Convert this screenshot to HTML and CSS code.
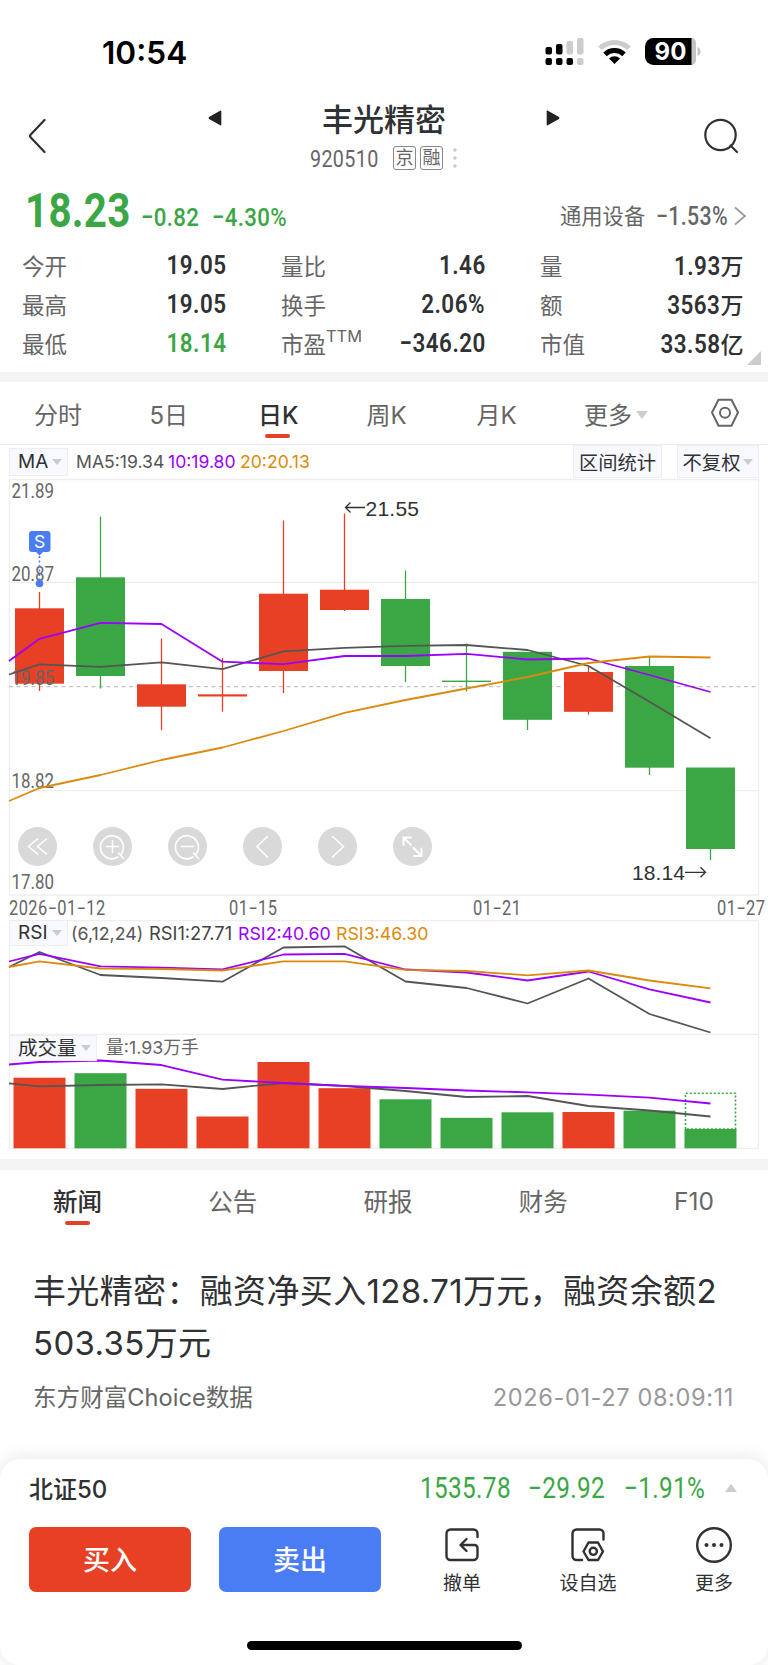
FILE: index.html
```html
<!DOCTYPE html>
<html lang="zh-CN">
  <head>
    <meta charset="utf-8">
    <title>丰光精密 920510</title>
    <link rel="stylesheet" href="styles.css">
  </head>
  <body>
    <!-- status bar -->
    <div class="status-bar">
      <span class="time">10:54</span>
      <svg class="status-icons" width="160" height="30" viewBox="543 36 160 30">
        <g fill="#000">
          <rect x="545.5" y="47" width="6.5" height="7.5" rx="2"/>
          <rect x="556" y="44" width="6.5" height="10.5" rx="2"/>
          <rect x="545.5" y="58" width="6.5" height="7" rx="2"/>
          <rect x="556" y="58" width="6.5" height="7" rx="2"/>
          <rect x="566.5" y="58" width="6.5" height="7" rx="2"/>
        </g>
        <g fill="#ccc">
          <rect x="566.5" y="41" width="6.5" height="13.5" rx="2"/>
          <rect x="577" y="38" width="6.5" height="16.5" rx="2"/>
          <rect x="577" y="58" width="6.5" height="7" rx="2"/>
        </g>
        <path d="M600 48.3a21 21 0 0 1 29 0" fill="none" stroke="#ccc" stroke-width="5"/>
        <path d="M605 54.3a14 14 0 0 1 19 0" fill="none" stroke="#000" stroke-width="5"/>
        <path d="M609 58.4a8 8 0 0 1 11 0L614.500 64z" fill="#000"/>
        <path d="M690 38h1.500a4.500 4.500 0 0 1 4.500 4.500v18a4.500 4.500 0 0 1-4.500 4.500H690zM697.500 47c4 1.500 4 7.500 0 9z" fill="#c4c4c4"/>
        <path d="M653.500 38H691.500V65H653.500a8.500 8.500 0 0 1-8.500-8.500V46.500a8.500 8.500 0 0 1 8.500-8.500z" fill="#000"/>
        <text x="670.500" y="60" class="battery-text">90</text>
      </svg>
    </div>

    <!-- header -->
    <header class="header">
      <svg class="back" width="18" height="36" viewBox="0 0 18 36"><path d="M16.500 2L2.600 16.700q-1.200 1.300 0 2.600L16.500 34" /></svg>
      <svg class="prev" width="14" height="16" viewBox="0 0 14 16"><path d="M12.500 0.600Q13.300 0.300 13.300 1.500V14.500Q13.300 15.700 12.300 15.300L1 9Q0 8 1 7z"/></svg>
      <div class="stock">
        <h1>丰光精密</h1>
        <div class="stock-code">
          <span class="code"><span class="num">920510</span></span>
          <span class="tag">京</span>
          <span class="tag">融</span>
          <svg width="4" height="20" viewBox="0 0 4 20"><g fill="#c8c8c8"><circle cx="2" cy="2" r="1.700"/><circle cx="2" cy="10" r="1.700"/><circle cx="2" cy="18" r="1.700"/></g></svg>
        </div>
      </div>
      <svg class="next" width="14" height="16" viewBox="0 0 14 16"><path d="M1.500 0.600Q0.700 0.300 0.700 1.500V14.500Q0.700 15.700 1.700 15.300L13 9Q14 8 13 7z"/></svg>
      <svg class="search" width="36" height="36" viewBox="0 0 36 36"><circle cx="17.500" cy="17" r="15.200"/><path d="M27.500 27.500L34 34"/></svg>
    </header>

    <!-- quote -->
    <section class="quote">
      <div class="price-row">
        <span class="price"><span class="num">18.23</span></span>
        <span class="change"><span class="num">−0.82</span></span>
        <span class="percent"><span class="num">−4.30%</span></span>
        <span class="sector">通用设备</span>
        <span class="sector-change"><span class="num">−1.53%</span></span>
        <svg width="14" height="20" viewBox="0 0 14 20"><path d="M2 1.500L12 10L2 18.500" fill="none" stroke="#999" stroke-width="1.700"/></svg>
      </div>
      <div class="stats">
        <div class="stat"><span>今开</span><b class="num">19.05</b></div>
        <div class="stat"><span>量比</span><b class="num">1.46</b></div>
        <div class="stat"><span>量</span><b><i class="num">1.93</i>万</b></div>
        <div class="stat"><span>最高</span><b class="num">19.05</b></div>
        <div class="stat"><span>换手</span><b class="num">2.06%</b></div>
        <div class="stat"><span>额</span><b><i class="num">3563</i>万</b></div>
        <div class="stat"><span>最低</span><b class="num green">18.14</b></div>
        <div class="stat"><span>市盈<sup>TTM</sup></span><b class="num">−346.20</b></div>
        <div class="stat"><span>市值</span><b><i class="num">33.58</i>亿</b></div>
      </div>
      <div class="corner"></div>
    </section>

    <!-- chart period tabs -->
    <nav class="period-tabs">
      <span class="tab">分时</span>
      <span class="tab">5日</span>
      <span class="tab active">日K</span>
      <span class="tab">周K</span>
      <span class="tab">月K</span>
      <span class="tab">更多<i class="caret"></i></span>
      <svg width="30" height="30" viewBox="0 0 30 30"><path d="M8.500 1.800H21.500L28 14.500L21.500 27.700H8.500L2 14.500z"/><circle cx="15" cy="14.800" r="5"/></svg>
    </nav>

    <section class="chart">
      <div class="ma-bar">
        <span class="picker">MA<i class="caret small"></i></span>
        <span class="ma5">MA5:19.34</span>
        <span class="ma10">10:19.80</span>
        <span class="ma20">20:20.13</span>
        <span class="tool range">区间统计</span>
        <span class="tool adjust">不复权<i class="caret small"></i></span>
      </div>

      <!-- daily candles -->
      <svg class="plot" width="768" height="418" viewBox="0 478 768 418">
        <g class="grid">
          <path d="M9.500 479.500H758.500V895H9.500z"/>
          <path d="M9 582.500H758M9 790.700H758"/>
          <path class="dashed" d="M9 686.700H758"/>
        </g>
        <g class="up">
          <path d="M39.500 592V691M161.500 638.500V730M222.500 658V711.700M283.500 520.500V693M344.500 513.500V611M588.500 667V714.700"/>
          <rect x="15" y="608.300" width="49" height="75.400"/>
          <rect x="137" y="684.300" width="49" height="22.400"/>
          <rect x="198" y="694.300" width="49" height="2.200"/>
          <rect x="259" y="593.700" width="49" height="77.300"/>
          <rect x="320" y="589.700" width="49" height="20.300"/>
          <rect x="564" y="672" width="49" height="39.800"/>
        </g>
        <g class="down">
          <path d="M100.500 516.500V688.500M405.500 570.500V682M466.500 643.500V691.500M527.500 652V730M649.500 657V775M710.500 768V860"/>
          <rect x="76" y="577.300" width="49" height="98.700"/>
          <rect x="381" y="599" width="49" height="67"/>
          <rect x="442" y="680.600" width="49" height="1.400"/>
          <rect x="503" y="651.800" width="49" height="68"/>
          <rect x="625" y="666" width="49" height="101.700"/>
          <rect x="686" y="767.500" width="49" height="81.500"/>
        </g>
        <g class="axis">
          <text x="11.500" y="498" textLength="42.500" lengthAdjust="spacingAndGlyphs">21.89</text>
          <text x="11.500" y="581" textLength="42.500" lengthAdjust="spacingAndGlyphs">20.87</text>
          <text x="11.500" y="684.500" textLength="42.500" lengthAdjust="spacingAndGlyphs">19.85</text>
          <text x="11.500" y="788" textLength="42.500" lengthAdjust="spacingAndGlyphs">18.82</text>
          <text x="11.500" y="888.500" textLength="42.500" lengthAdjust="spacingAndGlyphs">17.80</text>
        </g>
        <polyline class="line dark" points="9,674.500 39.500,664.300 100.500,666.800 161.500,662.300 222.500,669.200 283.500,651.300 344.500,647.800 405.500,645.800 466.500,645 527.500,650 588.500,666 649.500,701.700 710.500,738.300"/>
        <polyline class="line purple" points="9,661 39.500,638.800 100.500,622.800 161.500,624 222.500,661.700 283.500,664.200 344.500,656 405.500,656 466.500,653.800 527.500,659.500 588.500,658.500 649.500,675 710.500,692"/>
        <polyline class="line orange" points="9,801 39.500,788 100.500,775 161.500,760 222.500,747.500 283.500,731 344.500,712.800 405.500,700 466.500,688.500 527.500,677 588.500,663 649.500,656.500 710.500,657.500"/>

        <!-- sell marker -->
        <path d="M39.500 556V580" stroke="#4a7cf3" stroke-width="1.600" stroke-dasharray="2 2.500"/>
        <circle cx="39.500" cy="583.500" r="3.800" fill="#4a7cf3"/>
        <path d="M32 531H47.500a3 3 0 0 1 3 3V549a3 3 0 0 1-3 3H43L39.500 555.500L36 552H32a3 3 0 0 1-3-3V534a3 3 0 0 1 3-3z" fill="#4a7cf3"/>
        <text class="sell" x="39.700" y="548">S</text>

        <!-- high and low of the period -->
        <g class="extreme">
          <path d="M365 507.500H346M350.500 502.500L345.500 507.500L350.500 512.500M685 872.300H704.500M700.500 867.300L705.500 872.300L700.500 877.300"/>
          <text x="365.500" y="515.500" textLength="53.500">21.55</text>
          <text x="632" y="879.700" textLength="53">18.14</text>
        </g>

        <!-- chart controls -->
        <g class="controls">
          <circle cx="37.500" cy="846.500" r="19.500"/>
          <circle cx="112.500" cy="846.500" r="19.500"/>
          <circle cx="187.500" cy="846.500" r="19.500"/>
          <circle cx="262.500" cy="846.500" r="19.500"/>
          <circle cx="337.500" cy="846.500" r="19.500"/>
          <circle cx="412.500" cy="846.500" r="19.500"/>
          <path d="M37.500 839L28.500 846.500L37.500 854M46.500 839L37.500 846.500L46.500 854"/>
          <path d="M118 857A11.500 11.500 0 1 1 121 854.300M118.500 853L123.500 858.500M106.500 846.500H118.500M112.500 840.500V852.500"/>
          <path d="M193 857A11.500 11.500 0 1 1 196 854.300M193.500 853L198.500 858.500M181.500 846.500H193.500"/>
          <path d="M267.500 836.500L257 846.500L267.500 857M332.500 836.500L343.500 846.500L332.500 857"/>
          <path class="expand" d="M411 845L403.500 837.500M403.500 845V837.500H411M413.500 848L421.500 856M414 856H421.500V848.500"/>
        </g>
      </svg>

      <div class="dates">
        <span class="num">2026−01−12</span>
        <span class="num">01−15</span>
        <span class="num">01−21</span>
        <span class="num">01−27</span>
      </div>

      <div class="panel">
        <svg class="plot" width="768" height="115" viewBox="0 920 768 115">
          <g class="grid"><path d="M9.500 1035V920.500H758.500V1035M9 1034.500H758"/></g>
          <polyline class="line dark" points="9,967 39.500,952 100.500,975 161.500,978 222.500,981.700 283.500,947.500 344.500,946.300 405.500,981.500 466.500,988 527.500,1003.500 588.500,978.500 649.500,1014 710.500,1032.500"/>
          <polyline class="line purple" points="9,961.500 39.500,953.800 100.500,966.300 161.500,967.700 222.500,969.300 283.500,954.500 344.500,953.800 405.500,969.500 466.500,972.500 527.500,980.500 588.500,971.500 649.500,989.300 710.500,1002.500"/>
          <polyline class="line orange" points="9,967 39.500,961.300 100.500,968.500 161.500,969 222.500,970.500 283.500,961.300 344.500,961.300 405.500,969.800 466.500,971 527.500,975.300 588.500,970.500 649.500,980.500 710.500,988.300"/>
        </svg>
        <div class="panel-head">
          <span class="picker">RSI<i class="caret small"></i></span>
          <span class="rsi-args">(6,12,24)</span>
          <span class="rsi1">RSI1:27.71</span>
          <span class="rsi2">RSI2:40.60</span>
          <span class="rsi3">RSI3:46.30</span>
        </div>
      </div>

      <div class="panel">
        <svg class="plot" width="768" height="114" viewBox="0 1035 768 114">
          <g class="grid"><path d="M9.500 1035V1148.500H758.500V1035"/></g>
          <g class="up">
            <rect x="13.500" y="1077.700" width="52" height="70.600"/>
            <rect x="135.500" y="1088.800" width="52" height="59.500"/>
            <rect x="196.500" y="1116.500" width="52" height="31.800"/>
            <rect x="257.500" y="1062" width="52" height="86.300"/>
            <rect x="318.500" y="1088.200" width="52" height="60.100"/>
            <rect x="562.500" y="1112" width="52" height="36.300"/>
          </g>
          <g class="down">
            <rect x="74.500" y="1073.200" width="52" height="75.100"/>
            <rect x="379.500" y="1099.300" width="52" height="49"/>
            <rect x="440.500" y="1117.800" width="52" height="30.500"/>
            <rect x="501.500" y="1112.300" width="52" height="36"/>
            <rect x="623.500" y="1110.700" width="52" height="37.600"/>
            <rect x="684.500" y="1129" width="52" height="19.300"/>
            <path class="forecast" d="M685.500 1129V1093.300H735.500V1129z"/>
          </g>
          <polyline class="line dark" points="9,1083.300 39.500,1086.300 100.500,1085 161.500,1084.300 222.500,1089 283.500,1083 344.500,1086 405.500,1091 466.500,1097 527.500,1096 588.500,1106 649.500,1110.500 710.500,1116.500"/>
          <polyline class="line purple" points="9,1064.500 39.500,1062 100.500,1060.500 161.500,1065 222.500,1079.700 283.500,1083 344.500,1085.800 405.500,1088 466.500,1090.500 527.500,1092.300 588.500,1094.700 649.500,1097.700 710.500,1103.500"/>
        </svg>
        <div class="panel-head">
          <span class="picker wide">成交量<i class="caret small"></i></span>
          <span class="volume">量:1.93万手</span>
        </div>
      </div>
    </section>

    <!-- news -->
    <section class="news">
      <nav class="news-tabs">
        <span class="tab active">新闻</span>
        <span class="tab">公告</span>
        <span class="tab">研报</span>
        <span class="tab">财务</span>
        <span class="tab">F10</span>
      </nav>
      <article>
        <h2>丰光精密：融资净买入128.71万元，融资余额2<br>503.35万元</h2>
        <div class="meta">
          <span>东方财富Choice数据</span>
          <time>2026-01-27 08:09:11</time>
        </div>
      </article>
    </section>

    <!-- bottom trade bar -->
    <footer class="trade">
      <div class="index-row">
        <span class="index-name">北证50</span>
        <span class="index-num value"><span class="num">1535.78</span></span>
        <span class="index-num diff"><span class="num">−29.92</span></span>
        <span class="index-num rate"><span class="num">−1.91%</span></span>
        <i class="caret up-caret"></i>
      </div>
      <div class="actions">
        <button class="buy">买入</button>
        <button class="sell-btn">卖出</button>
        <div class="action">
          <svg width="36" height="36" viewBox="0 0 36 36"><path d="M33.500 10V6.500a4 4 0 0 0-4-4H6.500a4 4 0 0 0-4 4V29a4 4 0 0 0 4 4H29.500a4 4 0 0 0 4-4V21a3 3 0 0 0-3-3H17.500M22.500 12L16.500 18L22.500 24"/></svg>
          <span>撤单</span>
        </div>
        <div class="action">
          <svg width="36" height="36" viewBox="0 0 36 36"><path d="M33.500 12.500V6.500a4 4 0 0 0-4-4H6.500a4 4 0 0 0-4 4V29a4 4 0 0 0 4 4H12M18.500 15.500H28L33 24.500L28 33H18.500L13.500 24.500z"/><circle cx="23.300" cy="24.300" r="3.600"/></svg>
          <span>设自选</span>
        </div>
        <div class="action">
          <svg width="36" height="36" viewBox="0 0 36 36"><circle cx="18" cy="18" r="16.800"/><g class="dots"><circle cx="10.500" cy="18" r="2"/><circle cx="18" cy="18" r="2"/><circle cx="25.500" cy="18" r="2"/></g></svg>
          <span>更多</span>
        </div>
      </div>
      <div class="home-bar"></div>
    </footer>
  </body>
</html>
```
FILE: styles.css
```css
* {
  box-sizing: border-box;
}

body {
  margin: 0;
  width: 768px;
  height: 1665px;
  overflow: hidden;
  display: flex;
  flex-direction: column;
  background-color: #fff;
  color: #303133;
  font-family: Inter, "Noto Sans CJK SC", sans-serif;
}

svg {
  display: block;
  flex: none;
}

span {
  white-space: nowrap;
}

/* narrow figures */
.num {
  display: inline-block;
  font-family: Roboto, sans-serif;
  font-style: normal;
  letter-spacing: 0.4px;
  transform: scaleX(0.84);
  transform-origin: left center;
}

.green {
  color: #3ba744;
}

.caret {
  display: inline-block;
  border: 6.5px solid transparent;
  border-top: 8px solid #ccc;
  border-bottom: 0;
}

.caret.small {
  border-width: 5px;
  border-top-width: 6px;
  border-bottom: 0;
}

/* status bar */
.status-bar {
  height: 90px;
  padding: 36px 65px 0 102px;
  display: flex;
  justify-content: space-between;
}

.time {
  font-size: 31.6px;
  line-height: 33px;
  font-weight: 600;
  color: #000;
}

.battery-text {
  font-family: Inter, sans-serif;
  font-size: 24px;
  font-weight: 700;
  fill: #fff;
  text-anchor: middle;
}

/* header */
.header {
  height: 90px;
  padding: 0 29px 0 28px;
  display: flex;
  align-items: flex-start;
}

.back,
.search {
  margin-top: 28px;
  fill: none;
  stroke: #303133;
  stroke-width: 2.2;
  stroke-linecap: round;
}

.search {
  margin-left: auto;
}

.prev,
.next {
  margin-top: 20px;
  fill: #222;
}

.prev {
  margin-left: 162px;
}

.stock {
  width: 154px;
  margin: 0 85px;
}

.stock h1 {
  margin: 10px 0 0;
  font-size: 31px;
  line-height: 39px;
  font-weight: 500;
  text-align: center;
}

.stock-code {
  height: 26px;
  margin-top: 6px;
  padding-left: 3px;
  display: flex;
  align-items: center;
  gap: 4px;
  color: #666;
}

.code {
  width: 79px;
  font-size: 23.5px;
}

.tag {
  width: 23px;
  height: 24px;
  border: 1.5px solid #888;
  border-radius: 3px;
  font-size: 18px;
  line-height: 21px;
  text-align: center;
}

.stock-code svg {
  margin-left: 6px;
}

/* quote */
.quote {
  position: relative;
  height: 202px;
  padding: 0 21px 0 22px;
  border-bottom: 10px solid #f4f4f4;
}

.price-row {
  height: 65px;
  padding-left: 3px;
  display: flex;
  align-items: flex-start;
  color: #3ba744;
  line-height: 32px;
}

.price-row span {
  margin-top: 20px;
}

.price-row .num {
  margin-top: 0;
}

.price-row .price {
  width: 116px;
  margin-top: 1px;
  font-size: 48.5px;
  font-weight: 700;
  line-height: 58px;
}

.price .num {
  transform: scaleX(0.83);
}

.change {
  width: 71px;
  font-size: 26.5px;
  font-weight: 500;
}

.percent {
  width: 348px;
  font-size: 26.5px;
  font-weight: 500;
}

.sector {
  width: 96px;
  font-size: 21.3px;
  color: #666;
}

.sector-change {
  width: 77px;
  font-size: 26px;
  font-weight: 500;
  color: #666;
}

.sector-change .num {
  transform: scaleX(0.82);
}

.price-row svg {
  margin-top: 26px;
}

.stats {
  display: grid;
  grid-template-columns: 204.500px 204.500px 203.500px;
  column-gap: 54.500px;
  row-gap: 0;
}

.stat {
  height: 39px;
  display: flex;
  justify-content: space-between;
  align-items: center;
}

.stat span {
  font-size: 22.5px;
  color: #666;
}

.stat sup {
  position: relative;
  top: -2px;
  font-size: 16.4px;
  line-height: 0;
}

.stat b {
  font-size: 23px;
  font-weight: 500;
}

.stat .num {
  font-size: 26.7px;
  font-weight: 600;
  letter-spacing: 0.6px;
  transform-origin: right center;
}

.corner {
  position: absolute;
  right: 7px;
  bottom: 7px;
  border-left: 14px solid transparent;
  border-bottom: 14px solid #ccc;
}

/* period tabs */
.period-tabs {
  height: 63px;
  padding-left: 34px;
  display: grid;
  grid-template-columns: 115.500px 108.500px 108.500px 110px 107.500px 126px 30px;
  justify-items: start;
  align-items: center;
  border-bottom: 1px solid #eee;
  font-size: 24px;
  color: #666;
}

.tab {
  position: relative;
}

.tab.active {
  color: #303133;
  font-weight: 500;
}

.tab.active::after {
  content: "";
  position: absolute;
  left: 50%;
  bottom: -7px;
  width: 25px;
  height: 4px;
  margin-left: -13px;
  border-radius: 2px;
  background-color: #e84025;
}

.period-tabs .caret {
  margin-left: 4px;
  vertical-align: 5px;
}

.period-tabs svg {
  fill: none;
  stroke: #666;
  stroke-width: 2;
  stroke-linejoin: round;
}

/* chart */
.ma-bar {
  height: 33px;
  padding: 0 9px;
  display: flex;
  align-items: center;
  font-size: 17.6px;
}

.picker {
  width: 59px;
  height: 28px;
  padding-left: 8px;
  display: flex;
  align-items: center;
  gap: 4px;
  background-color: #f8f9fe;
  border: 1px solid #eee;
  font-size: 19px;
}

.picker.wide {
  width: 88px;
  font-size: 19.5px;
}

.ma5 {
  width: 92px;
  margin-left: 8px;
  color: #555;
}

.ma10 {
  width: 72px;
}

.ma10,
.rsi2 {
  color: #9b00ff;
}

.ma20,
.rsi3 {
  color: #dc8a0c;
}

.tool {
  height: 33px;
  display: flex;
  align-items: center;
  justify-content: center;
  gap: 3px;
  background-color: #f8f9fe;
  border: 1px solid #eee;
  font-size: 19.3px;
}

.range {
  width: 89px;
  margin-left: auto;
}

.adjust {
  width: 82px;
  margin-left: 15px;
}

.grid path {
  fill: none;
  stroke: #eee;
  stroke-width: 1.3;
}

.grid .dashed {
  stroke: #c4c4c4;
  stroke-dasharray: 4 3.5;
}

.up {
  fill: #e84025;
  stroke: none;
}

.down {
  fill: #3ba744;
}

.up path {
  stroke: #e84025;
  stroke-width: 1.3;
}

.down path {
  stroke: #3ba744;
  stroke-width: 1.3;
}

.down .forecast {
  fill: none;
  stroke-width: 1.6;
  stroke-dasharray: 2 2;
}

.line {
  fill: none;
  stroke-width: 1.8;
  stroke-linejoin: round;
}

.dark {
  stroke: #555;
}

.purple {
  stroke: #9b00ff;
}

.orange {
  stroke: #dc8a0c;
}

.axis {
  font-family: Roboto, sans-serif;
  font-size: 19.5px;
  fill: #666;
}

.sell {
  font-family: Inter, sans-serif;
  font-size: 17.5px;
  fill: #fff;
  text-anchor: middle;
}

.extreme {
  font-family: "Liberation Sans", Arial, sans-serif;
  font-size: 21px;
  fill: #303133;
}

.extreme path {
  fill: none;
  stroke: #303133;
  stroke-width: 1.3;
}

.controls circle {
  fill: #d9d9d9;
}

.controls path {
  fill: none;
  stroke: #fff;
  stroke-width: 1.6;
  stroke-linecap: round;
}

.controls .expand {
  stroke-width: 2;
}

.dates {
  height: 24px;
  padding-left: 9px;
  display: grid;
  grid-template-columns: 220px 243.500px 244px 50px;
  align-items: center;
  font-size: 19.5px;
  color: #666;
}

.dates .num {
  letter-spacing: 0.5px;
}

.panel {
  position: relative;
}

.panel-head {
  position: absolute;
  left: 9px;
  top: 0;
  height: 26px;
  display: flex;
  align-items: center;
  font-size: 17.8px;
}

.panel-head .picker {
  height: 26px;
  line-height: 24px;
}

.rsi-args {
  width: 78px;
  margin-left: 3px;
  color: #555;
}

.rsi1 {
  width: 89px;
  font-size: 18.3px;
  color: #444;
}

.rsi2 {
  width: 98px;
}

.volume {
  margin-left: 9px;
  line-height: 22px;
  color: #666;
}

/* news */
.news {
  border-top: 11px solid #f4f4f4;
  margin-top: 10px;
}

.news-tabs {
  height: 61px;
  padding: 0 54px 0 53px;
  display: flex;
  align-items: center;
  justify-content: space-between;
  font-size: 24.5px;
  color: #666;
}

article {
  padding: 34px 34px 0 33px;
}

h2 {
  margin: 0;
  font-size: 33px;
  line-height: 52px;
  font-weight: 400;
  letter-spacing: 0.35px;
  white-space: nowrap;
}

.meta {
  margin-top: 14px;
  display: flex;
  justify-content: space-between;
  font-size: 23.6px;
  line-height: 30px;
  color: #666;
}

.meta time {
  letter-spacing: 0.6px;
  color: #999;
}

/* trade bar */
.trade {
  height: 206px;
  margin-top: auto;
  flex: none;
  border-radius: 20px;
  background-color: #fff;
  box-shadow: 0 0 20px rgba(0, 0, 0, 0.1);
}

.index-row {
  height: 60px;
  padding: 0 30px 3px 29px;
  display: flex;
  align-items: center;
  color: #3ba744;
}

.index-name {
  width: 391px;
  font-size: 24px;
  font-weight: 500;
  color: #303133;
}

.index-num {
  font-size: 29px;
}

.value {
  width: 108px;
}

.diff {
  width: 96px;
}

.rate {
  width: 101px;
}

.up-caret {
  transform: rotate(180deg);
}

.actions {
  height: 100px;
  padding: 8px 29px 0;
  display: flex;
  align-items: flex-start;
}

button {
  flex: none;
  width: 162px;
  height: 65px;
  margin-right: 28px;
  padding: 0 0 3px;
  border: 0;
  border-radius: 7px;
  color: #fff;
  font-family: inherit;
  font-size: 27px;
  font-weight: 500;
}

.buy {
  background-color: #e84025;
}

.sell-btn {
  background-color: #4a7cf3;
}

.action {
  flex: none;
  width: 126px;
  display: flex;
  flex-direction: column;
  align-items: center;
  font-size: 19px;
  line-height: 24px;
}

.action:nth-child(3) {
  margin-left: -10px;
}

.action svg {
  margin-bottom: 9px;
  fill: none;
  stroke: #303133;
  stroke-width: 2.4;
  stroke-linecap: round;
  stroke-linejoin: round;
}

.action .dots {
  fill: #303133;
  stroke: none;
}

.home-bar {
  width: 275px;
  height: 9px;
  margin: 22px auto 0;
  border-radius: 5px;
  background-color: #000;
}
```
